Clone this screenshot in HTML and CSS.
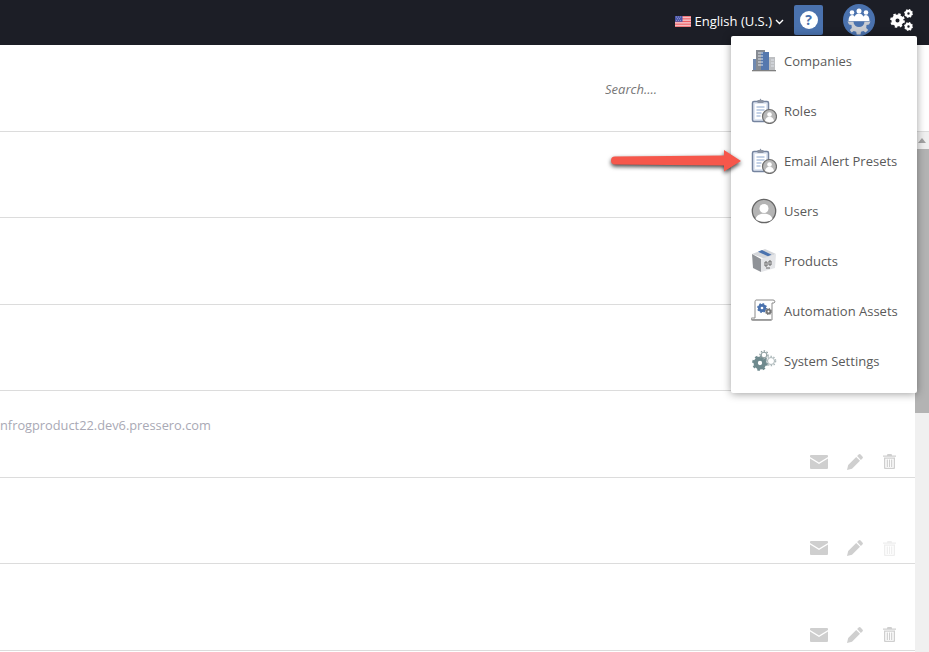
FILE: index.html
```html
<!DOCTYPE html>
<html lang="en">
<head>
<meta charset="utf-8">
<title>Admin</title>
<link rel="stylesheet" href="styles.css">
</head>
<body>
<svg class="sprites" width="0" height="0" aria-hidden="true">
  <defs>
    <symbol id="i-mail" viewBox="0 0 18 14"><path d="M1 0h16a1 1 0 0 1 1 1v1L9 7.500 0 2V1a1 1 0 0 1 1-1z"/><path d="M0 3.600 9 9l9-5.400V13a1 1 0 0 1-1 1H1a1 1 0 0 1-1-1z"/></symbol>
    <symbol id="i-pencil" viewBox="0 0 16 16"><path d="M11.600.6a1.400 1.400 0 0 1 2 0l1.800 1.800a1.400 1.400 0 0 1 0 2l-1.500 1.500L10.100 2.100zM9.200 3l3.800 3.800-8 8L0 16l1.200-5z"/></symbol>
    <symbol id="i-trash" viewBox="0 0 13 15"><path d="M4.500 0h4l.6 1.500H13v1.300H0V1.500h3.900z"/><path d="M1 3.600h11V14a1 1 0 0 1-1 1H2a1 1 0 0 1-1-1zm1.300 1.200V13.800h8.400V4.800z" fill-rule="evenodd"/><path d="M3.700 5.600h1.200v7.400H3.700zM5.900 5.600h1.200v7.400H5.900zM8.100 5.600h1.200v7.400H8.100z"/></symbol>
    <symbol id="i-clip" viewBox="0 0 26 26">
      <rect x="1.500" y="3.500" width="16" height="20" rx="1.500" fill="#dfe6f2" stroke="#75849f" stroke-width="1.500"/>
      <rect x="4" y="6" width="11" height="15" fill="#fff"/>
      <path d="M6.500 3.500V2h2l1-1.500 1 1.500h2v3h-6z" fill="#8b93a3"/>
      <path d="M5.500 9h8M5.500 12h8M5.500 15h5M5.500 18h4" stroke="#8aa5d0" stroke-width="1.200"/>
      <circle cx="18.500" cy="18.500" r="7" fill="#b8b8b8" stroke="#6e6e6e" stroke-width="1.200"/>
      <circle cx="18.500" cy="16.500" r="2.300" fill="#fff"/>
      <path d="M14 23c.5-3 2.300-4.300 4.500-4.300S22.500 20 23 23c-2.500 1.500-6.500 1.500-9 0z" fill="#fff"/>
    </symbol>
    <symbol id="i-gear" viewBox="0 0 24 24">
      <circle cx="12" cy="12" r="6.500" fill="none" stroke="currentColor" stroke-width="6.500"/>
      <circle cx="12" cy="12" r="10" fill="none" stroke="currentColor" stroke-width="3.600" stroke-dasharray="3.900 3.950"/>
    </symbol>
  </defs>
</svg>

<header class="topbar">
  <div class="lang">
    <svg class="flag" viewBox="0 0 16 11" width="16" height="11" aria-hidden="true">
      <rect width="16" height="11" fill="#f6f6f8"/>
      <path d="M0 .7h16M0 2.300h16M0 3.900h16M0 5.500h16M0 7.100h16M0 8.700h16M0 10.300h16" stroke="#ee4a50" stroke-width=".9"/>
      <rect width="7.500" height="5.800" fill="#4a55a8"/>
      <path d="M1 1h.6M3 1h.6M5 1h.6M2 2.700h.6M4 2.700h.6M1 4.400h.6M3 4.400h.6M5 4.400h.6" stroke="#fff" stroke-width=".7"/>
    </svg>
    <span>English (U.S.)</span>
    <svg class="chev" viewBox="0 0 9 6" width="9" height="6" aria-hidden="true"><path d="M1 1l3.500 3.500L8 1" fill="none" stroke="#fff" stroke-width="1.400"/></svg>
  </div>
  <button class="help" type="button"><span class="help-dot">?</span></button>
  <div class="avatar">
    <svg viewBox="0 0 32 32" width="32" height="32" aria-hidden="true">
      <circle cx="16" cy="16" r="16" fill="#4a72ae"/>
      <g fill="#fff">
        <circle cx="9" cy="8.500" r="2.300"/><circle cx="16" cy="7" r="2.500"/><circle cx="23" cy="8.500" r="2.300"/>
        <path d="M5.500 17c0-4 1.500-6 3.500-6s2.500 1 3 2v4zM12 17v-5c.5-1.500 2-2.500 4-2.500s3.500 1 4 2.500v5zM20 17v-4c.5-1 1-2 3-2s3.500 2 3.500 6z"/>
      </g>
      <path d="M4.500 17.500h23l-1.500 3-2.500.5-.3 3 2 2-2.600 2.400-2.200-1.500-2.400.9-.5 2.700h-3.800l-.5-2.700-2.400-.9-2.200 1.500L6.800 26l2-2-.3-3-2.500-.5z" fill="#c9ccd2"/>
      <path d="M10.500 17.500a5.500 5.500 0 0 0 11 0z" fill="#4a72ae"/>
    </svg>
  </div>
  <svg class="gears" viewBox="0 0 23 22" width="23" height="22" aria-hidden="true">
    <use href="#i-gear" x="0" y="4" width="15" height="15"/>
    <use href="#i-gear" x="14" y="0" width="9" height="9"/>
    <use href="#i-gear" x="14" y="13" width="9" height="9"/>
  </svg>
</header>

<div class="toolbar"><input class="search" type="text" placeholder="Search...."></div>

<div class="main">
  <div class="rows">
    <div class="row"></div>
    <div class="row"></div>
    <div class="row"></div>
    <div class="row">
      <div class="url">nfrogproduct22.dev6.pressero.com</div>
      <div class="actions">
        <svg class="a-mail"><use href="#i-mail"/></svg><svg class="a-pencil"><use href="#i-pencil"/></svg><svg class="a-trash"><use href="#i-trash"/></svg>
      </div>
    </div>
    <div class="row">
      <div class="actions">
        <svg class="a-mail"><use href="#i-mail"/></svg><svg class="a-pencil"><use href="#i-pencil"/></svg><svg class="a-trash faint"><use href="#i-trash"/></svg>
      </div>
    </div>
    <div class="row">
      <div class="actions">
        <svg class="a-mail"><use href="#i-mail"/></svg><svg class="a-pencil"><use href="#i-pencil"/></svg><svg class="a-trash"><use href="#i-trash"/></svg>
      </div>
    </div>
  </div>
  <div class="scrollbar">
    <div class="sb-btn"><span class="sb-tri"></span></div>
    <div class="sb-thumb"></div>
  </div>
</div>

<nav class="menu">
  <a class="item">
    <svg class="ico" viewBox="-1 -1 26 26" aria-hidden="true">
      <path d="M0 21h24v1.300H0z" fill="#808080"/>
      <rect x="1" y="10" width="6" height="11" fill="#7089b0"/>
      <rect x="4" y="1" width="9" height="20" fill="#868b93"/>
      <rect x="9" y="3" width="8" height="18" fill="#5578ae"/>
      <rect x="17" y="8" width="6" height="13" fill="#bdbfc2"/>
      <path d="M6 4h5M6 7h5M6 10h5M6 13h5M6 16h5M19 11h3M19 14h3M19 17h3" stroke="#dfe3ea" stroke-width="1.100"/>
    </svg>
    <span>Companies</span>
  </a>
  <a class="item"><svg class="ico" aria-hidden="true"><use href="#i-clip"/></svg><span>Roles</span></a>
  <a class="item"><svg class="ico" aria-hidden="true"><use href="#i-clip"/></svg><span>Email Alert Presets</span></a>
  <a class="item">
    <svg class="ico" viewBox="0 0 26 26" aria-hidden="true">
      <circle cx="13" cy="13" r="11.700" fill="#b4b4b4" stroke="#666" stroke-width="1.300"/>
      <circle cx="13" cy="10.500" r="4.500" fill="#fff"/>
      <path d="M4.500 21c1-3.500 4-5.300 8.500-5.300s7.500 1.800 8.500 5.300c-4 3.500-13 3.500-17 0z" fill="#fff"/>
    </svg>
    <span>Users</span>
  </a>
  <a class="item">
    <svg class="ico" viewBox="0 0 26 26" aria-hidden="true">
      <path d="M1 6 14 1l11 5-11 5z" fill="#d4d6da"/>
      <path d="M7 3.700 17 8.300l3.500-1.500L11 2z" fill="#4a72ae"/>
      <path d="M1 6l9 5v13L2 20z" fill="#8f9297"/>
      <path d="M10 11l15-5-1 14-14 4z" fill="#e4e5e8"/>
      <path d="M14 14h2v4h-2zM18 13h2v4h-2zM15 20h4" stroke="#666" fill="none" stroke-width="1"/>
    </svg>
    <span>Products</span>
  </a>
  <a class="item">
    <svg class="ico" viewBox="0 0 26 24" aria-hidden="true">
      <path d="M5 1h17c2 0 2.500 2 1 3h-2v17H1c-1.500 0-1.500-2 0-2h3V3c0-1 .5-2 1-2z" fill="#fff" stroke="#8a8a8a" stroke-width="1"/>
      <path d="M0 20h20v1.800H1.500z" fill="#9a9a9a"/>
      <use href="#i-gear" x="6" y="4" width="10" height="10" color="#4a72ae"/>
      <use href="#i-gear" x="14" y="9" width="7" height="7" color="#777"/>
    </svg>
    <span>Automation Assets</span>
  </a>
  <a class="item">
    <svg class="ico" viewBox="0 0 26 24" aria-hidden="true">
      <use href="#i-gear" x="1" y="6" width="16" height="16" color="#6f8a8e"/>
      <circle cx="13" cy="6" r="2.800" fill="#fff" stroke="#8a9a9c"/>
      <circle cx="13" cy="6" r="4" fill="none" stroke="#8a9a9c" stroke-width="1.300" stroke-dasharray="1.500 1.500"/>
      <circle cx="20" cy="12" r="3.500" fill="#fff" stroke="#a9b5b7"/>
      <circle cx="20" cy="12" r="4.700" fill="none" stroke="#a9b5b7" stroke-width="1.200" stroke-dasharray="1.500 1.500"/>
    </svg>
    <span>System Settings</span>
  </a>
</nav>

<svg class="arrow" viewBox="0 0 134 28" width="134" height="28" aria-hidden="true">
  <path d="M6 8.500 L115 7.500 V2 L132 13 L115 23.500 V17.500 L6 16.500 a4 4 0 0 1 0-8z" fill="#f6574b"/>
</svg>
</body>
</html>
```
FILE: styles.css
```css
* { box-sizing: border-box; }
html, body { margin: 0; height: 100%; }
body {
  position: relative;
  overflow: hidden;
  background: #fff;
  font-family: "Open Sans", sans-serif;
  font-size: 13px;
  color: #5a5a5a;
}
.sprites { position: absolute; }

.topbar {
  height: 45px;
  background: #1c1e26;
  display: flex;
  align-items: center;
  justify-content: flex-end;
  padding: 0 16px 5px 0;
  color: #fff;
}
.lang { display: flex; align-items: center; font-size: 13px; margin: 2px 10px 0 0; }
.flag { margin-right: 4px; }
.chev { margin-left: 3px; margin-top: 2px; }
.help {
  width: 29px;
  height: 30px;
  padding: 0;
  border: 0;
  border-radius: 2px;
  background: #4a72ae;
  display: flex;
  align-items: center;
  justify-content: center;
  margin-right: 20px;
}
.help-dot {
  width: 18px;
  height: 18px;
  border-radius: 50%;
  background: #fff;
  color: #4a72ae;
  font: 700 14px/18px "Open Sans", sans-serif;
  text-align: center;
}
.avatar { width: 32px; height: 32px; margin-right: 15px; }
.avatar svg, .gears { display: block; }
.gears { color: #fff; }

.toolbar {
  height: 87px;
  border-bottom: 1px solid #dcdcdc;
  padding: 36px 0 0 605px;
}
.search {
  display: block;
  width: 110px;
  padding: 0;
  border: 0;
  outline: 0;
  font: italic 13px/17px "Open Sans", sans-serif;
  color: #777;
}
.search::placeholder { color: #777; opacity: 1; }

.main { display: flex; height: 520px; }
.rows { flex: 1; min-width: 0; margin-top: -.25px; overflow: hidden; }
.row {
  position: relative;
  height: 86.5px;
  border-bottom: 1px solid #dcdcdc;
  display: flex;
  flex-direction: column;
}
.url {
  margin-top: 25px;
  line-height: 18px;
  color: #a9a9b5;
  font-size: 12.8px;
}
.actions {
  margin-top: auto;
  padding: 0 19px 7px 0;
  display: flex;
  justify-content: flex-end;
  align-items: center;
  gap: 19px;
  color: #cfcfcf;
  fill: currentColor;
}
.a-mail { width: 18px; height: 14px; }
.a-pencil { width: 16px; height: 16px; margin-right: 1px; }
.a-trash { width: 13px; height: 15px; }
.faint { color: #eeeeee; }

.scrollbar { width: 14px; background: #f0f0f0; display: flex; flex-direction: column; }
.sb-btn { height: 17px; display: flex; align-items: center; justify-content: center; }
.sb-tri {
  width: 0;
  height: 0;
  border-left: 4px solid transparent;
  border-right: 4px solid transparent;
  border-bottom: 5px solid #a3a3a3;
}
.sb-thumb { height: 264px; background: #b3b3b3; }

.menu {
  position: absolute;
  left: 731px;
  top: 36px;
  width: 186px;
  padding-bottom: 7px;
  background: #fff;
  border-radius: 2px;
  box-shadow: 0 1px 8px rgba(0, 0, 0, .38);
}
.item {
  height: 50px;
  padding-left: 20px;
  display: flex;
  align-items: center;
  color: #5a5a5a;
}
.ico { width: 26px; height: 26px; margin-right: 7px; flex: none; }

.arrow {
  position: absolute;
  left: 609px;
  top: 148px;
  filter: drop-shadow(0 2px 2px rgba(0, 0, 0, .75));
}
```
